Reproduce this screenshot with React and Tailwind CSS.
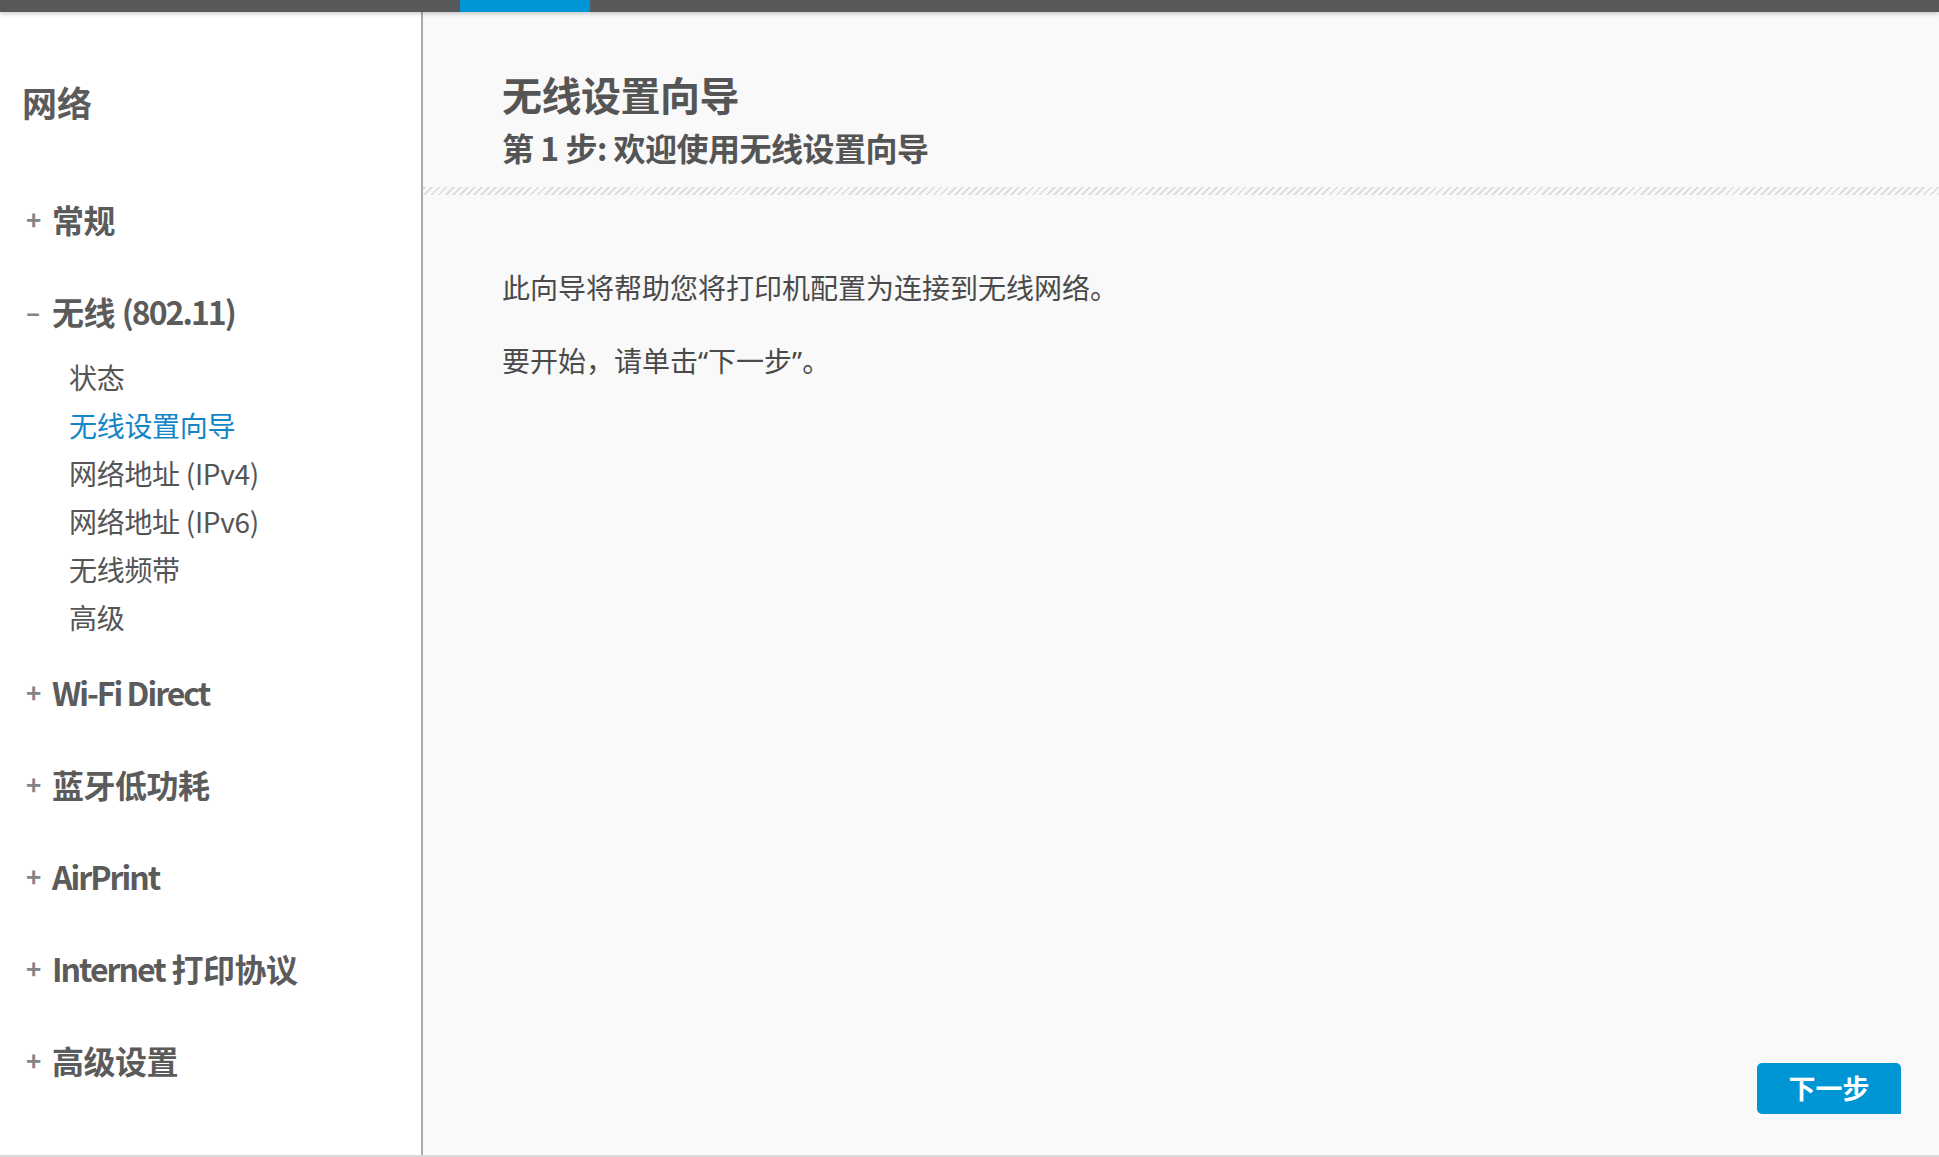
import React from "react";

const groups = [
  { label: "常规" },
  {
    label: "无线 ",
    latin: "(802.11)",
    open: true,
    items: ["状态", "无线设置向导", "网络地址 (IPv4)", "网络地址 (IPv6)", "无线频带", "高级"],
    active: 1,
  },
  { latin: "Wi-Fi Direct" },
  { label: "蓝牙低功耗" },
  { latin: "AirPrint" },
  { latin: "Internet", rest: " 打印协议" },
  { label: "高级设置" },
];

function Group({ group }) {
  return (
    <div>
      <div className="flex items-center h-[40px] leading-[40px]">
        <span className="w-[30px] pl-[4px] text-[26px] font-bold text-[#858585] leading-none">
          {group.open ? "–" : "+"}
        </span>
        <span className="text-[32px] font-bold text-[#5b5b5b] tracking-[-0.5px] whitespace-pre">
          {group.label}
          {group.latin && <span className="tracking-[-2px]">{group.latin}</span>}
          {group.rest}
        </span>
      </div>
      {group.open && (
        <ul className="mt-[21.5px] pl-[47px]">
          {group.items.map((item, i) => (
            <li
              key={item}
              className={`h-[48px] leading-[48px] text-[28px] tracking-[-0.3px] ${i === group.active ? "text-[#1286c8]" : "text-[#555555]"}`}
            >
              {item}
            </li>
          ))}
        </ul>
      )}
    </div>
  );
}

export default function App() {
  return (
    <div className="h-screen w-full flex flex-col bg-[#f9f9f9] font-['Noto_Sans_CJK_SC','Noto_Sans',sans-serif] overflow-hidden">
      {/* top bar */}
      <div className="h-[12px] flex shrink-0 bg-[#58595b] shadow-[0_2px_4px_rgba(0,0,0,0.2)] relative z-10">
        <div className="w-[460px]"></div>
        <div className="w-[130px] bg-[#0096d6]"></div>
      </div>

      <div className="flex flex-1 min-h-0">
        {/* sidebar */}
        <aside className="w-[423px] shrink-0 bg-white border-r-2 border-[#ababab] pl-[22px] pt-[69px]">
          <h1 className="text-[35px] font-bold text-[#5b5b5b] leading-[42px]">网络</h1>
          <div className="mt-[76px] flex flex-col">
            {groups.map((g, i) => (
              <div key={i} className={i === 0 ? "" : i === 2 ? "mt-[31px]" : "mt-[52px]"}>
                <Group group={g} />
              </div>
            ))}
          </div>
        </aside>

        {/* main */}
        <main className="flex-1 flex flex-col">
          <div className="px-[79px] pt-[58px]">
            <h2 className="text-[40px] font-bold text-[#555555] leading-[48px] tracking-[-0.5px]">无线设置向导</h2>
            <h3 className="mt-[9px] text-[32px] font-bold text-[#555555] leading-[40px] tracking-[-0.5px]">
              第 1 步: 欢迎使用无线设置向导
            </h3>
          </div>
          <div className="mt-[20px] h-[8px] bg-[repeating-linear-gradient(-45deg,#dedede_0,#dedede_2px,transparent_2px,transparent_5px)]"></div>
          <div className="px-[79px] text-[28px] text-[#4a4a4a]">
            <p className="mt-[74px] leading-[36px]">此向导将帮助您将打印机配置为连接到无线网络。</p>
            <p className="mt-[37px] leading-[36px]">
              要开始，请单击<span className="font-['Noto_Sans',sans-serif]">“</span>下一步
              <span className="font-['Noto_Sans',sans-serif]">”</span>。
            </p>
          </div>
          <div className="mt-auto flex justify-end pr-[38px] pb-[41px]">
            <button className="w-[144px] h-[51px] bg-[#0096d6] text-white text-[27px] font-bold rounded-[5px] rounded-br-none">
              下一步
            </button>
          </div>
        </main>
      </div>
      <div className="h-[2px] shrink-0 bg-[#d9d9d9]"></div>
    </div>
  );
}
